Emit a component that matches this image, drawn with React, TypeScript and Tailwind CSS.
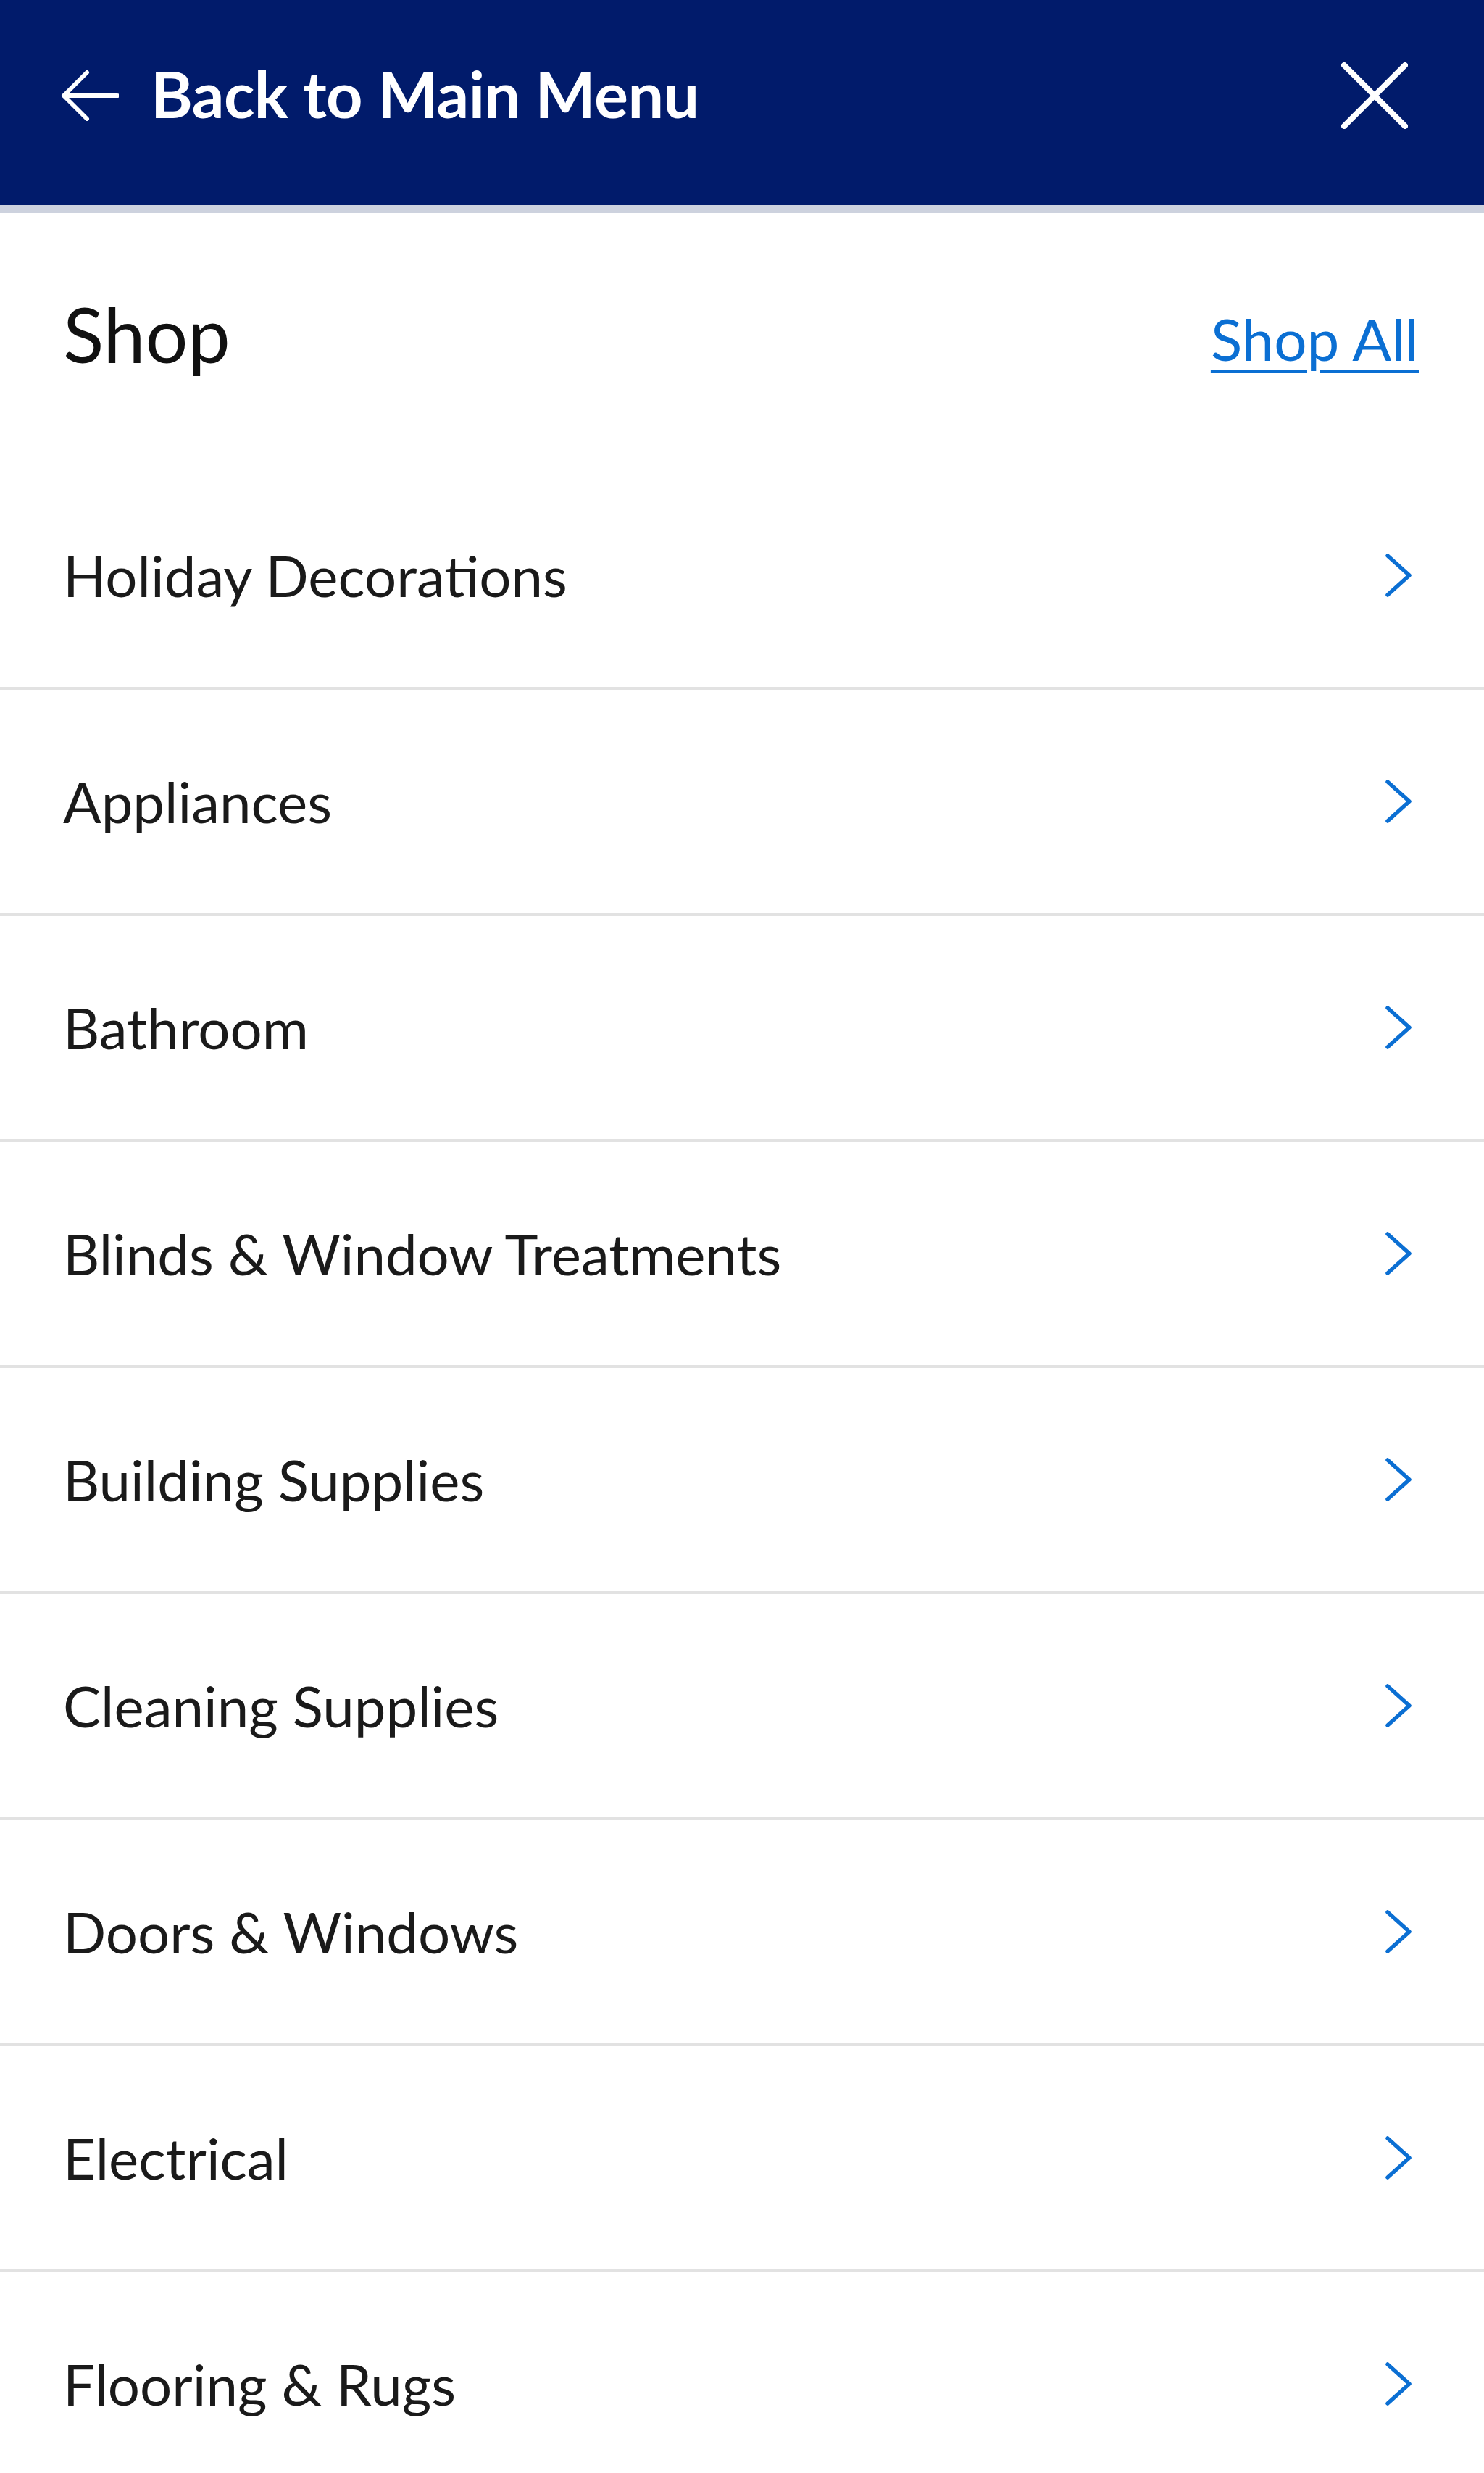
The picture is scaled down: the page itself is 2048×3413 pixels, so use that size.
const categories = [
  "Holiday Decorations",
  "Appliances",
  "Bathroom",
  "Blinds & Window Treatments",
  "Building Supplies",
  "Cleaning Supplies",
  "Doors & Windows",
  "Electrical",
  "Flooring & Rugs",
];

const font = { fontFamily: "Lato, 'Noto Sans', sans-serif" };

const BackArrow = () => (
  <svg width="80" height="70" viewBox="0 0 80 70" fill="none">
    <path
      d="M78 35H4M36 3L4 35l32 32"
      stroke="white"
      strokeWidth="6"
      strokeLinecap="round"
      strokeLinejoin="round"
    />
  </svg>
);

const CloseIcon = () => (
  <svg width="92" height="92" viewBox="0 0 92 92" fill="none">
    <path
      d="M4 4l84 84M88 4L4 88"
      stroke="white"
      strokeWidth="8"
      strokeLinecap="round"
    />
  </svg>
);

const Chevron = () => (
  <svg width="40" height="60" viewBox="0 0 40 60" fill="none">
    <path
      d="M5 3l30 27L5 57"
      stroke="#0b6fd3"
      strokeWidth="5.5"
      strokeLinecap="round"
      strokeLinejoin="round"
    />
  </svg>
);

export default function App() {
  return (
    <div className="w-[2048px] min-h-[3413px] bg-white" style={font}>
      {/* top bar */}
      <div className="h-[283px] bg-[#011b6b] flex items-center justify-between pl-[84px] pr-[105px] pb-[20px]">
        <div className="flex items-center gap-[44px] text-white">
          <BackArrow />
          <span className="text-[88px] font-bold leading-none tracking-[-0.5px] pb-[6px]">
            Back to Main Menu
          </span>
        </div>
        <CloseIcon />
      </div>
      <div className="h-[11px] bg-[#cdd2de]" />

      {/* heading */}
      <div className="h-[346px] flex items-start justify-between pl-[87px] pr-[90px] pt-[112px]">
        <h1 className="text-[104px] leading-[110px] text-[#111]">Shop</h1>
        <a
          href="#"
          className="text-[80px] leading-[110px] text-[#0b6fd3] underline decoration-[5px] underline-offset-[12px] mt-[6px]"
        >
          Shop All
        </a>
      </div>

      {/* categories */}
      <ul>
        {categories.map((c) => (
          <li
            key={c}
            className="h-[312px] border-b-[4px] border-[#e2e2e2] flex items-center justify-between pl-[87px] pr-[98px]"
          >
            <span className="text-[78px] text-[#1a1a1a] leading-none">{c}</span>
            <Chevron />
          </li>
        ))}
      </ul>
    </div>
  );
}
